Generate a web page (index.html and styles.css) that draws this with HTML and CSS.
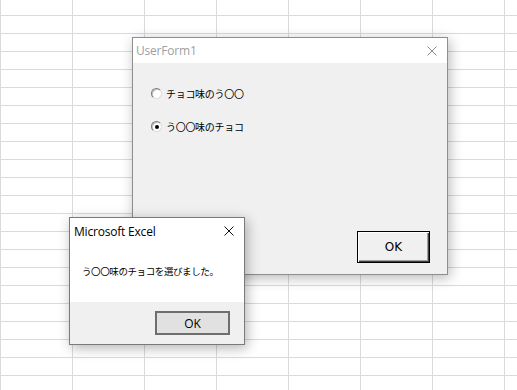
FILE: index.html
```html
<!DOCTYPE html>
<html lang="ja">
<head>
    <meta charset="UTF-8">
    <title>UserForm1</title>
    <link rel="stylesheet" href="styles.css">
</head>
<body>
    <div class="sheet">
        <div class="window userform">
            <div class="titlebar">
                <span class="title">UserForm1</span>
                <span class="close">
                    <svg width="10" height="10" viewBox="0 0 10 10"><path d="M0.5 0.5L9.5 9.5M9.5 0.5L0.5 9.5" stroke="#8a8a8a" stroke-width="1" fill="none"/></svg>
                </span>
            </div>
            <div class="form-body">
                <label class="option"><span class="radio"></span>チョコ味のう〇〇</label>
                <label class="option"><span class="radio checked"></span>う〇〇味のチョコ</label>
                <div class="form-actions">
                    <button class="btn-classic">OK</button>
                </div>
            </div>
        </div>

        <div class="window msgbox">
            <div class="msg-main">
                <div class="titlebar">
                    <span class="title">Microsoft Excel</span>
                    <span class="close">
                        <svg width="10" height="10" viewBox="0 0 10 10"><path d="M0.5 0.5L9.5 9.5M9.5 0.5L0.5 9.5" stroke="#111" stroke-width="1" fill="none"/></svg>
                    </span>
                </div>
                <p class="message">う〇〇味のチョコを選びました。</p>
            </div>
            <div class="msg-footer">
                <button class="btn-modern">OK</button>
            </div>
        </div>
    </div>
</body>
</html>
```

FILE: styles.css
```css
*{margin:0;padding:0;box-sizing:border-box;}
body{
    width: 517px;
    height: 390px;
    overflow: hidden;
    background-color: #fff;
}
.sheet{
    position: relative;
    width: 517px;
    height: 390px;
    background-image:
        linear-gradient(to right, #dadada 1px, transparent 1px),
        linear-gradient(to bottom, #dadada 1px, transparent 1px);
    background-size: 72px 100%, 100% 18px;
    background-position: 0 0, 0 15px;
}
.window{
    position: absolute;
    display: flex;
    flex-direction: column;
    background-color: #fff;
}
.titlebar{
    display: flex;
    align-items: center;
    justify-content: space-between;
    background-color: #fff;
}
.close{
    display: flex;
    width: 10px;
    height: 10px;
}

/* userform */
.userform{
    left: 132px;
    top: 37px;
    width: 316px;
    height: 238px;
    border: 1px solid #8e8e8e;
    box-shadow: 2px 3px 12px rgba(0,0,0,.28);
}
.userform .titlebar{
    height: 25px;
    padding: 0 10px 0 3px;
}
.userform .title{
    font-family: "Open Sans", "Noto Sans", sans-serif;
    font-size: 12px;
    color: #a0a0a0;
    letter-spacing: -0.2px;
}
.form-body{
    flex: 1;
    display: flex;
    flex-direction: column;
    gap: 17px;
    padding: 22px 17px 11px 18px;
    background-color: #f0f0f0;
}
.option{
    display: flex;
    align-items: center;
    gap: 4px;
    height: 16px;
    font-family: "Noto Sans CJK JP", sans-serif;
    font-size: 10px;
    letter-spacing: -0.3px;
    color: #000;
}
.radio{
    position: relative;
    width: 11px;
    height: 11px;
    border-radius: 50%;
    border: 1px solid;
    border-color: #7a7a7a #dcdcdc #dcdcdc #7a7a7a;
    background-color: #fff;
    box-shadow: inset 1px 1px 0 #c4c4c4;
}
.radio.checked::after{
    content: '';
    position: absolute;
    left: 3px;
    top: 3px;
    width: 4px;
    height: 4px;
    border-radius: 50%;
    background-color: #000;
}
.form-actions{
    margin-top: auto;
    display: flex;
    justify-content: flex-end;
}
.btn-classic{
    width: 73px;
    height: 32px;
    border: 1px solid #000;
    background-color: #f0f0f0;
    box-shadow: inset 1px 1px 0 #fff, inset -1px -1px 0 #404040, inset -2px -2px 0 #a0a0a0;
    font-family: "DejaVu Sans", sans-serif;
    font-size: 12px;
    color: #000;
}

/* msgbox */
.msgbox{
    left: 69px;
    top: 217px;
    width: 176px;
    height: 128px;
    border: 1px solid #7a7a7a;
    box-shadow: 2px 3px 12px rgba(0,0,0,.3);
}
.msg-main{
    height: 84px;
    background-color: #fff;
}
.msgbox .titlebar{
    height: 26px;
    padding: 0 10px 0 4px;
}
.msgbox .title{
    font-family: "Open Sans", "Noto Sans", sans-serif;
    font-size: 12px;
    color: #000;
    letter-spacing: -0.2px;
}
.message{
    padding: 20px 0 0 12px;
    font-family: "Noto Sans CJK JP", sans-serif;
    font-size: 9.5px;
    line-height: 14px;
    letter-spacing: -0.4px;
    color: #000;
}
.msg-footer{
    flex: 1;
    display: flex;
    justify-content: flex-end;
    align-items: flex-start;
    padding: 9px 14px 0 0;
    background-color: #f0f0f0;
}
.btn-modern{
    width: 75px;
    height: 24px;
    border: 2px solid #6e6e6e;
    background-color: #e1e1e1;
    font-family: "Open Sans", "Noto Sans", sans-serif;
    font-size: 12px;
    color: #000;
}
```
